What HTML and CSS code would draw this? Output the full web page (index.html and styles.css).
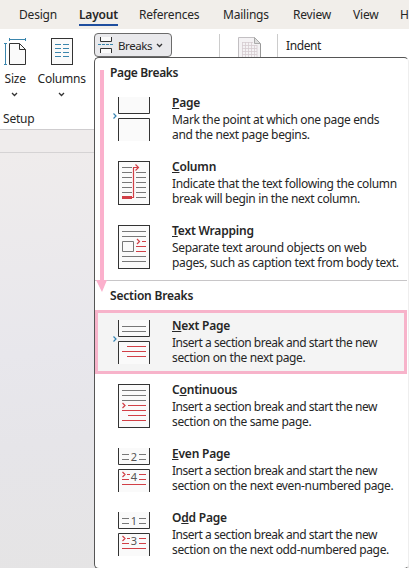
FILE: index.html
```
<!DOCTYPE html>
<html lang="en">
<head>
  <meta charset="UTF-8" />
  <title>Layout - Breaks</title>
  <link rel="stylesheet" href="styles.css">
</head>
<body>
  <nav class="tabs">
    <span>Design</span>
    <span class="active">Layout</span>
    <span>References</span>
    <span>Mailings</span>
    <span>Review</span>
    <span>View</span>
    <span class="help">H</span>
  </nav>

  <div class="ribbon">
    <div class="group setup">
      <div class="tools">
        <div class="tool size">
          <svg width="24" height="30" viewBox="0 0 24 30">
            <path d="M7.500 6.500h10l6 6v15h-16z" fill="#fafafa" stroke="#333" />
            <path d="M17.500 6.500v6h6" fill="none" stroke="#333" />
            <path d="M7.500 2.500h16M7.500 1v3M23.500 1v3M3.500 6.500v21M2 6.500h3M2 27.500h3" fill="none" stroke="#3b86ad" />
          </svg>
          <span>Size</span>
          <svg class="chevron" width="7" height="5" viewBox="0 0 7 5"><path d="M1 1l2.500 2.500L6 1" /></svg>
        </div>
        <div class="tool columns">
          <svg width="22" height="30" viewBox="0 0 22 30">
            <rect x=".5" y="1.500" width="21" height="26" fill="#fafafa" stroke="#333" />
            <path d="M4 7.500h6M4 11.500h6M4 15.500h6M4 19.500h6M12 7.500h6M12 11.500h6M12 15.500h6M12 19.500h6" stroke="#3b86ad" />
          </svg>
          <span>Columns</span>
          <svg class="chevron" width="7" height="5" viewBox="0 0 7 5"><path d="M1 1l2.500 2.500L6 1" /></svg>
        </div>
      </div>
      <div class="group-name">Setup</div>
    </div>

    <button class="breaks-btn">
      <svg width="15" height="16" viewBox="0 0 15 16">
        <path d="M2.500 0v4.500h11V0M2.500 16v-4.500h11V16" fill="#fafafa" stroke="#333" />
        <path d="M0 7.500h15" stroke="#3b86ad" stroke-dasharray="3 1" />
      </svg>
      <span>Breaks</span>
      <svg class="chevron" width="7" height="5" viewBox="0 0 7 5"><path d="M1 1l2.500 2.500L6 1" /></svg>
    </button>

    <div class="manuscript">
      <svg width="24" height="24" viewBox="0 0 24 24">
        <path d="M.5 24V.5h16l6 6V24" fill="#f4f2f4" stroke="#c2bfc2" />
        <path d="M16.500.5v6h6z" fill="#ddd" stroke="#aaa" />
        <path d="M22.500 7v17" stroke="#999" />
        <path d="M4 5.500h11M4 8.500h15M4 11.500h15M4 14.500h15M4 17.500h15M4 20.500h15M4.500 5v16M7.500 5v16M10.500 5v16M13.500 5v16M16.500 8v13M19 8v13" fill="none" stroke="#d6cbd1" stroke-width=".8" />
      </svg>
    </div>
    <span class="indent">Indent</span>
  </div>

  <div class="ruler"></div>
  <div class="document"></div>

  <div class="menu">
    <h2>Page Breaks</h2>

    <div class="item">
      <svg class="icon" viewBox="0 0 38 44">
        <path class="page" d="M6.500 0v16.500h31V0M6.500 44V21.500h31V44" />
        <path class="mark" d="M1.500 16.500l2.500 2.500-2.500 2.500" />
      </svg>
      <div class="text">
        <h3><u>P</u>age</h3>
        <p>Mark the point at which one page ends<br>and the next page begins.</p>
      </div>
    </div>

    <div class="item">
      <svg class="icon" viewBox="0 0 38 44">
        <rect class="page" x="6.500" y=".5" width="31" height="43" />
        <path class="line" d="M10 6.500h10M10 11.500h10M10 16.500h10M10 21.500h10M10 26.500h10M10 31.500h10M24 11.500h10M24 16.500h10M24 21.500h10M24 26.500h10M24 31.500h10M24 36.500h10" />
        <path class="red" d="M20 36.500h1.500v-30H26M23.500 3.500l3 3-3 3" />
        <path class="red thick" d="M10 36.500h10" />
      </svg>
      <div class="text">
        <h3><u>C</u>olumn</h3>
        <p>Indicate that the text following the column<br>break will begin in the next column.</p>
      </div>
    </div>

    <div class="item">
      <svg class="icon" viewBox="0 0 38 44">
        <rect class="page" x="6.500" y=".5" width="31" height="43" />
        <path class="line" d="M10 6.500h24M10 11.500h24M10.500 16.500h11v10h-11zM10 31.500h24M10 36.500h24" />
        <path class="red" d="M25 14l2.500 2.500L25 19M30 16.500h4M24 21.500h10M24 26.500h10" />
      </svg>
      <div class="text">
        <h3><u>T</u>ext Wrapping</h3>
        <p>Separate text around objects on web<br>pages, such as caption text from body text.</p>
      </div>
    </div>

    <hr>
    <h2 class="section">Section Breaks</h2>

    <div class="item insert selected">
      <svg class="icon" viewBox="0 0 38 44">
        <path class="page" d="M6.500 0v16.500h31V0M6.500 44V21.500h31V44" />
        <path class="line" d="M10 6.500h24M10 11.500h24" />
        <path class="red" d="M15 26.500h19M10 31.500h24M15 36.500h19" />
        <path class="mark" d="M1.500 16.500l2.500 2.500-2.500 2.500" />
      </svg>
      <div class="text">
        <h3><u>N</u>ext Page</h3>
        <p>Insert a section break and start the new<br>section on the next page.</p>
      </div>
    </div>

    <div class="item insert">
      <svg class="icon" viewBox="0 0 38 44">
        <rect class="page" x="6.500" y=".5" width="31" height="43" />
        <path class="line" d="M10 6.500h24M10 11.500h24M10 16.500h24" />
        <path class="red" d="M10.500 19l2.500 2.500-2.500 2.500M16 21.500h18M10 26.500h24M16 31.500h18M10 36.500h24" />
      </svg>
      <div class="text">
        <h3>C<u>o</u>ntinuous</h3>
        <p>Insert a section break and start the new<br>section on the same page.</p>
      </div>
    </div>

    <div class="item insert">
      <svg class="icon" viewBox="0 0 38 44">
        <path class="page" d="M6.500 0v16.500h31V0M6.500 44V21.500h31V44" />
        <path class="line" d="M10 6.500h7M10 11.500h7M27 6.500h7M27 11.500h7" />
        <path class="red" d="M10.500 24l2.500 2.500-2.500 2.500M15 26.500h3M10 31.500h7M27 26.500h7M27 31.500h7M10 36.500h24" />
        <text x="22" y="13">2</text>
        <text x="22" y="33">4</text>
      </svg>
      <div class="text">
        <h3><u>E</u>ven Page</h3>
        <p>Insert a section break and start the new<br>section on the next even-numbered page.</p>
      </div>
    </div>

    <div class="item insert">
      <svg class="icon" viewBox="0 0 38 44">
        <path class="page" d="M6.500 0v16.500h31V0M6.500 44V21.500h31V44" />
        <path class="line" d="M10 6.500h7M10 11.500h7M27 6.500h7M27 11.500h7" />
        <path class="red" d="M10.500 24l2.500 2.500-2.500 2.500M15 26.500h3M10 31.500h7M27 26.500h7M27 31.500h7M10 36.500h24" />
        <text x="22" y="13">1</text>
        <text x="22" y="33">3</text>
      </svg>
      <div class="text">
        <h3>O<u>d</u>d Page</h3>
        <p>Insert a section break and start the new<br>section on the next odd-numbered page.</p>
      </div>
    </div>

    <svg class="arrow" width="12" height="222" viewBox="0 0 12 222">
      <path d="M5 0h4v210h3L7 222 1 210H5z" fill="#fbb0cc" />
    </svg>
  </div>
</body>
</html>
```
FILE: styles.css
```
* {
  box-sizing: border-box;
}

body {
  margin: 0;
  height: 568px;
  overflow: hidden;
  position: relative;
  display: flex;
  flex-direction: column;
  background: #fff;
  color: #262626;
  font-family: "Noto Sans", "Open Sans", sans-serif;
  font-size: 12px;
  letter-spacing: -0.2px;
}

svg {
  display: block;
}

.tabs {
  display: grid;
  grid-template-columns: 60px 60px 84px 70px 60px 47px 9px;
  height: 29px;
  padding-left: 19px;
  background: #f1eeea;
  line-height: 29px;
  white-space: nowrap;
  flex: none;
}

.tabs span {
  justify-self: start;
  height: 26px;
}

.tabs .active {
  font-weight: 600;
  border-bottom: 2px solid #1f4e9e;
}

.ribbon {
  display: flex;
  align-items: flex-start;
  height: 100px;
  flex: none;
  background: #fff;
}

.setup {
  width: 94px;
}

.tools {
  display: flex;
  height: 80px;
  padding-top: 8px;
}

.tool {
  display: flex;
  flex-direction: column;
  align-items: center;
}

.tool span {
  line-height: 16px;
  margin: 4px 0 5px;
}

.size {
  width: 32px;
  margin-left: -1px;
}

.size span {
  margin-left: 2px;
}

.columns {
  width: 68px;
}

.chevron path {
  fill: none;
  stroke: #333;
  stroke-width: 1.3;
}

.group-name {
  padding-left: 3px;
  line-height: 20px;
}

.breaks-btn {
  display: flex;
  align-items: center;
  width: 78px;
  height: 24px;
  margin-top: 4px;
  padding: 0 0 0 3px;
  border: 1px solid #6b6b6b;
  border-radius: 4px;
  background: #e9e9ec;
  color: inherit;
  font: inherit;
  font-size: 11.5px;
  letter-spacing: -0.4px;
}

.breaks-btn span {
  width: 38px;
  margin-left: 5px;
  text-align: left;
}

.manuscript {
  width: 59px;
  height: 24px;
  margin: 5px 0 0 47px;
  padding: 3px 0 0 18px;
  border-left: 1px solid #ccc;
  border-right: 1px solid #ccc;
}

.indent {
  margin: 9px 0 0 8px;
  line-height: 16px;
  letter-spacing: -0.4px;
}

.ruler {
  height: 24px;
  flex: none;
  background: #efecec;
  border-top: 1px solid #cfcdcf;
  border-bottom: 1px solid #d5d3d4;
}

.document {
  flex: 1;
  background: linear-gradient(175deg, #efecec, #e8e7ec 45%, #e6e5e9 65%, #e5e4e4);
}

.menu {
  position: absolute;
  left: 94px;
  top: 57px;
  width: 315px;
  height: 512px;
  border: 1px solid #555;
  border-right-color: #eee;
  border-radius: 5px;
  background: #fff;
}

.menu h2 {
  height: 29px;
  margin: 0;
  padding-left: 15px;
  font-size: 12px;
  font-weight: 600;
  line-height: 29px;
  letter-spacing: -0.35px;
}

.menu hr {
  width: 312px;
  height: 1px;
  margin: 1px 0 0;
  border: 0;
  background: #c8c6c8;
}

.menu h2.section {
  line-height: 30px;
  letter-spacing: -0.2px;
}

.item {
  display: flex;
  width: 312px;
  height: 64px;
  padding: 10px 0 0 17px;
  white-space: nowrap;
}

.selected {
  padding: 7px 0 0 14px;
  border: 3px solid #f7b3ca;
  background: #f4f4f4;
}

.icon {
  width: 38px;
  height: 44px;
  flex: none;
}

.page {
  fill: #fafafa;
  stroke: #333;
}

.line {
  fill: none;
  stroke: #777;
}

.red {
  fill: none;
  stroke: #d13f46;
  stroke-width: 1.2;
}

.thick {
  stroke-width: 3;
}

.mark {
  fill: none;
  stroke: #3482b0;
  stroke-width: 1.2;
}

.icon text {
  fill: #555;
  font-size: 11px;
  letter-spacing: 0;
  text-anchor: middle;
}

.text {
  margin: -3px 0 0 22px;
}

.text h3 {
  height: 18px;
  margin: 0;
  font-size: 12px;
  font-weight: 600;
  line-height: 18px;
}

.text p {
  margin: 0;
  line-height: 15px;
  letter-spacing: -0.35px;
}

.insert p::first-line {
  letter-spacing: -0.47px;
}

u {
  text-underline-offset: 1px;
}

.arrow {
  position: absolute;
  left: 0;
  top: 12px;
}
```
